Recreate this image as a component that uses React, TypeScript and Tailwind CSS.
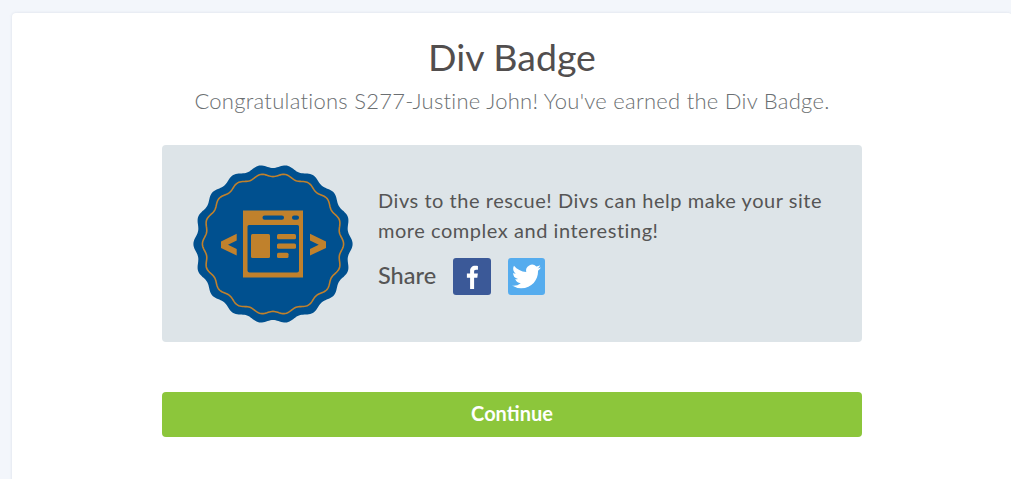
import React from 'react';

// wavy circle outline for the badge edge
function wavyPath(cx: number, cy: number, r: number, amp: number, bumps: number) {
  const pts: string[] = [];
  const steps = 360;
  for (let i = 0; i < steps; i++) {
    const a = (i / steps) * Math.PI * 2;
    const rr = r + amp * Math.cos(a * bumps);
    pts.push(`${(cx + rr * Math.cos(a)).toFixed(2)} ${(cy + rr * Math.sin(a)).toFixed(2)}`);
  }
  return `M${pts.join('L')}Z`;
}

function DivBadge() {
  const gold = '#c0812c';
  const blue = '#00508f';
  return (
    <svg width="160" height="158" viewBox="0 0 160 158" className="shrink-0">
      <path d={wavyPath(80, 79, 77.8, 1.8, 18)} fill={blue} />
      <path d={wavyPath(80, 79, 69, 1.6, 18)} fill="none" stroke={gold} strokeWidth="1.6" />
      {/* window */}
      <path
        fillRule="evenodd"
        fill={gold}
        d="M50 45.500h60v67H50z M56 60a1.500 1.500 0 0 0-1.500 1.500v44a2 2 0 0 0 2 2h47.500a2 2 0 0 0 2-2v-44a1.500 1.500 0 0 0-1.500-1.500z"
      />
      <rect x="69.500" y="50.500" width="21.500" height="4.300" rx="2.100" fill={blue} />
      <rect x="99" y="50.500" width="7" height="4.300" rx="2.100" fill={blue} />
      <rect x="58" y="69" width="19" height="24" rx="1.500" fill={gold} />
      <rect x="84" y="69" width="19" height="5.300" rx="1.500" fill={gold} />
      <rect x="84" y="78.500" width="19" height="5.300" rx="1.500" fill={gold} />
      <rect x="84" y="87.800" width="11.500" height="5.300" rx="1.500" fill={gold} />
      {/* angle brackets */}
      <path d="M43.700 68.800L28 76.500V83L43.700 90.500V84L35 79.700L43.700 75.500Z" fill={gold} />
      <path d="M117 68.800L133 76.500V83L117 90.500V84L125.700 79.700L117 75.500Z" fill={gold} />
    </svg>
  );
}

export default function App() {
  return (
    <div className="h-[479px] overflow-hidden bg-[#f3f6fb] pl-3 pt-[13px] font-['Lato','Open_Sans',sans-serif]">
      <div className="flex h-[500px] w-[1000px] flex-col items-center rounded bg-white pt-[21px] shadow-[0_0_3px_rgba(120,135,160,0.2)]">
        <h1 className="text-[37.500px] leading-[46px] text-[#524e4e]">Div Badge</h1>
        <p className="mt-[7px] text-[22px] font-light leading-[28px] tracking-[0.27px] text-[#6b6f72]">
          Congratulations S277-Justine John! You've earned the Div Badge.
        </p>

        <div className="mt-[30px] flex h-[197px] w-[700px] items-center rounded bg-[#dde4e8] pl-[31px]">
          <DivBadge />
          <div className="ml-[25px] w-[470px] pb-[6px]">
            <p className="-mt-px text-[20px] leading-[30px] tracking-[0.54px] text-[#555]">
              Divs to the rescue! Divs can help make your site
              <br />
              more complex and interesting!
            </p>
            <div className="mt-[13px] flex items-center">
              <span className="-mt-0.5 text-[23.500px] font-medium leading-[37px] text-[#555]">Share</span>
              <a className="ml-[17px] flex h-[37px] w-[38px] items-center justify-center rounded-[3px] bg-[#3b5998]">
                <svg width="13" height="24" viewBox="0 0 16 30">
                  <path
                    fill="#fff"
                    d="M5 30V16H1v-5.500h4V7.500C5 3.500 7.500 1 11.200 1c1.600 0 2.900.1 3.600.2v4.800h-2.400C10.500 6 10 6.900 10 8.300v2.200h4.700l-.7 5.500h-4v14z"
                  />
                </svg>
              </a>
              <a className="ml-[17px] flex size-[37px] items-center justify-center rounded-[3px] bg-[#55acee]">
                <svg width="29" height="29" viewBox="0 0 24 24">
                  <path
                    fill="#fff"
                    d="M23.950 4.570a10 10 0 0 1-2.820.77 4.960 4.960 0 0 0 2.160-2.720c-.95.550-2 .96-3.130 1.190a4.920 4.920 0 0 0-8.380 4.480C7.690 8.090 4.060 6.130 1.640 3.160a4.820 4.820 0 0 0-.67 2.480c0 1.710.87 3.210 2.190 4.100a4.900 4.900 0 0 1-2.230-.62v.06a4.920 4.920 0 0 0 3.950 4.830 4.900 4.900 0 0 1-2.210.08 4.930 4.930 0 0 0 4.600 3.420A9.870 9.870 0 0 1 0 19.540a13.940 13.940 0 0 0 7.550 2.210c9.060 0 14-7.500 14-13.980 0-.21 0-.42-.01-.63a10 10 0 0 0 2.410-2.570z"
                  />
                </svg>
              </a>
            </div>
          </div>
        </div>

        <button className="mt-[50px] h-[45px] w-[700px] rounded bg-[#8cc63b] pb-[3px] text-[20px] font-bold text-white">
          Continue
        </button>
      </div>
    </div>
  );
}
